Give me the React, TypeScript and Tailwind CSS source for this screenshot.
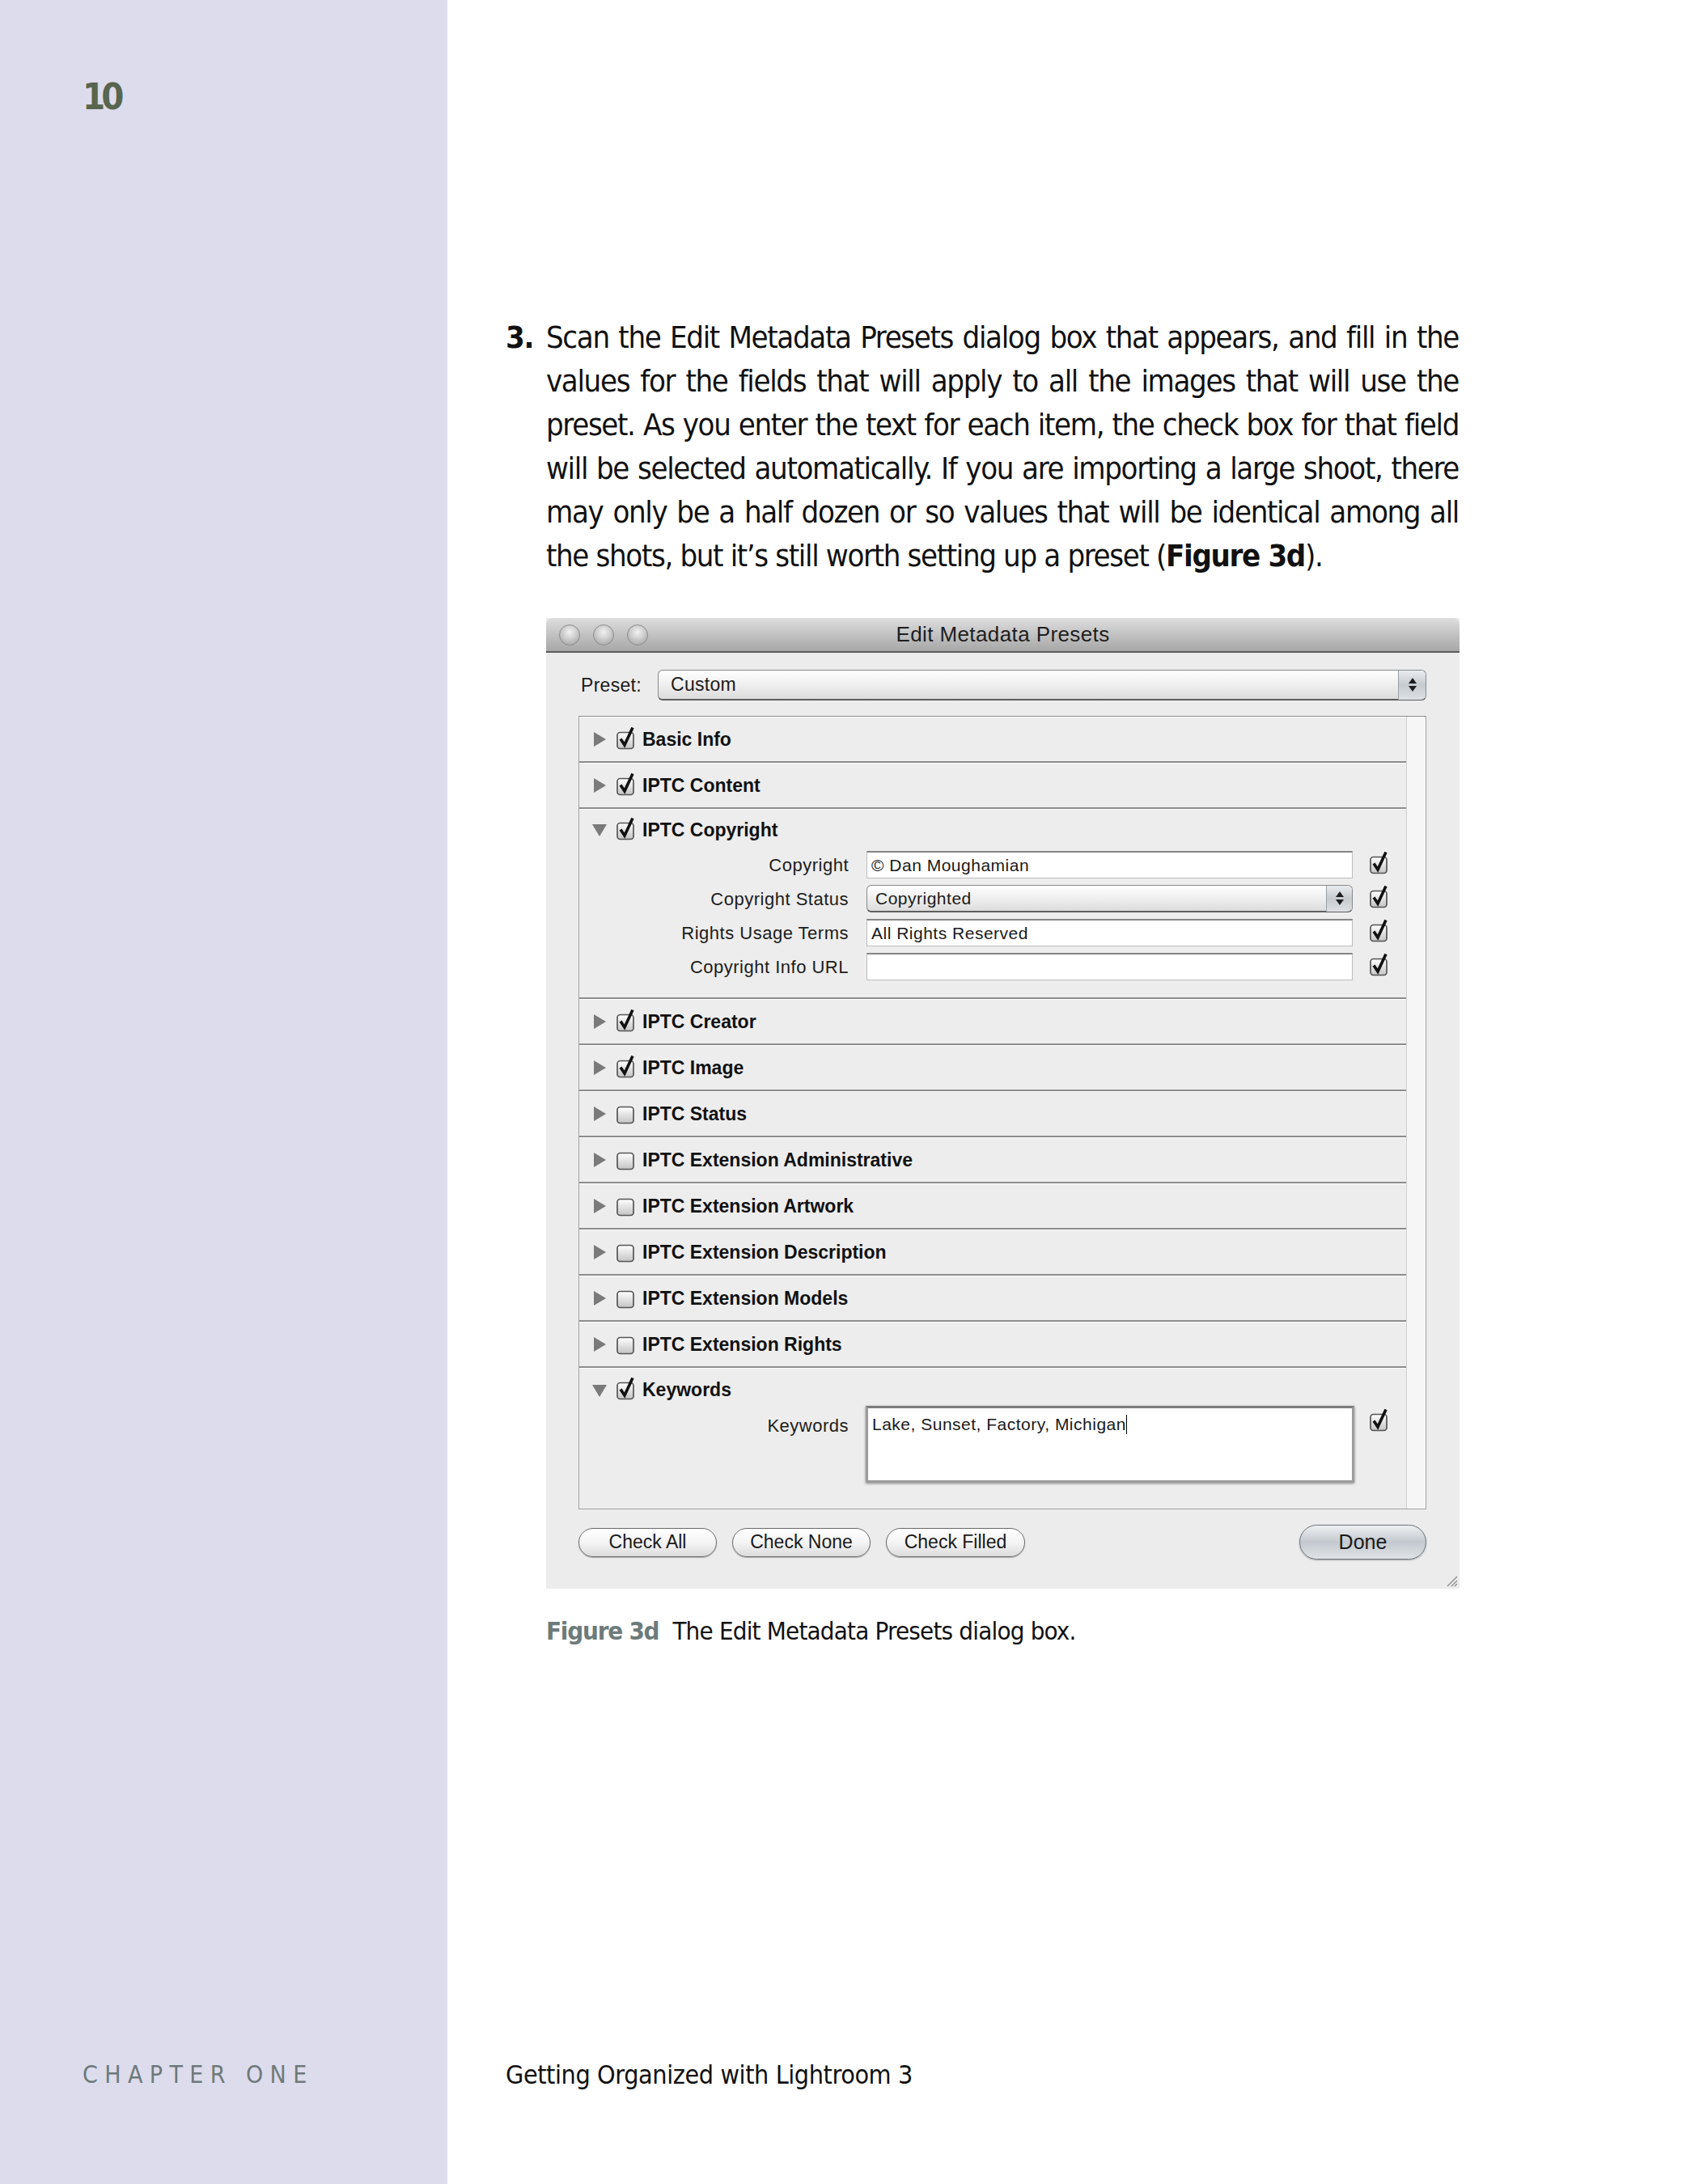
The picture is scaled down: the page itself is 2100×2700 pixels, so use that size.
import React from "react";

const NARROW = "[font-family:'Liberation_Sans_Narrow','DejaVu_Sans_Condensed',Lato,sans-serif]";
const UI = "[font-family:'Liberation_Sans',Arial,sans-serif]";

const Box = ({ on = true }: { on?: boolean }) => (
  <svg width="28" height="30" viewBox="0 0 28 30" className="shrink-0">
    <defs>
      <linearGradient id="cbg" x1="0" y1="0" x2="0" y2="1">
        <stop offset="0" stopColor="#ffffff" />
        <stop offset="1" stopColor="#c4c4c4" />
      </linearGradient>
    </defs>
    <rect x="3" y="8.5" width="20" height="20" rx="3.5" fill="url(#cbg)" stroke="#555" strokeWidth="1.7" />
    {on && (
      <path d="M7 16.5 L12 24 L22 2.5" fill="none" stroke="#111" strokeWidth="3.6" strokeLinecap="butt" strokeLinejoin="miter" />
    )}
  </svg>
);

const Tri = ({ open = false }: { open?: boolean }) => (
  <svg width="18" height="18" viewBox="0 0 18 18" className="shrink-0">
    {open ? <polygon points="0,2 18,2 9,17" fill="#7a7a7a" /> : <polygon points="2,0 17,9 2,18" fill="#7a7a7a" />}
  </svg>
);

const Stepper = ({ w, h }: { w: string; h: string }) => (
  <div className={`${w} ${h} shrink-0 rounded-r-[6px] border-l border-[#9aa0a6] bg-gradient-to-b from-[#e9ecef] via-[#c6cbd0] to-[#dde1e5] flex flex-col items-center justify-center gap-[3px]`}>
    <svg width="10" height="7" viewBox="0 0 10 7"><polygon points="5,0 10,7 0,7" fill="#1e1e1e" /></svg>
    <svg width="10" height="7" viewBox="0 0 10 7"><polygon points="0,0 10,0 5,7" fill="#1e1e1e" /></svg>
  </div>
);

const Header = ({ label, on = true, open = false, h = "h-[56px]" }: { label: string; on?: boolean; open?: boolean; h?: string }) => (
  <div className={`${h} flex items-center pl-[16px]`}>
    <Tri open={open} />
    <div className="ml-[10px] -mt-[5px]">
      <Box on={on} />
    </div>
    <span className={`ml-[6px] text-[23px] font-bold text-[#111] ${UI}`}>{label}</span>
  </div>
);

const Row = ({ label, on = true }: { label: string; on?: boolean }) => (
  <div className="h-[57px] border-b-2 border-[#8c8c8c] shadow-[inset_0_1px_0_#ffffff]">
    <Header label={label} on={on} />
  </div>
);

const FieldRow = ({ label, children }: { label: string; children: React.ReactNode }) => (
  <div className="flex items-center h-[34px]">
    <div className={`w-[333px] text-right text-[22px] tracking-[0.5px] text-[#1c1c1c] ${UI}`}>{label}</div>
    <div className="ml-[22px] w-[601px] h-[34px]">{children}</div>
    <div className="ml-[19px] -mt-[6px]">
      <Box />
    </div>
  </div>
);

const TextField = ({ value }: { value: string }) => (
  <div className={`w-full h-full bg-white border border-[#bdbdbd] border-t-2 border-t-[#858585] flex items-center pl-[5px] text-[21px] tracking-[0.5px] text-[#1a1a1a] ${UI}`}>
    {value}
  </div>
);

const Btn = ({ label, w }: { label: string; w: string }) => (
  <div className={`${w} h-[36px] rounded-full border-[1.5px] border-[#6a6a6a] bg-gradient-to-b from-[#ffffff] via-[#f4f4f4] to-[#dcdcdc] shadow-[0_1px_1px_rgba(0,0,0,0.25)] flex items-center justify-center text-[23px] text-[#1a1a1a] ${UI}`}>
    {label}
  </div>
);

const Light = () => (
  <div className="w-[26px] h-[26px] rounded-full border border-[#8d8d8d] bg-[radial-gradient(circle_at_50%_35%,#f2f2f2,#c4c4c4_55%,#9a9a9a)]" />
);

const lines = [
  "Scan the Edit Metadata Presets dialog box that appears, and fill in the",
  "values for the fields that will apply to all the images that will use the",
  "preset. As you enter the text for each item, the check box for that field",
  "will be selected automatically. If you are importing a large shoot, there",
  "may only be a half dozen or so values that will be identical among all",
];

export default function App() {
  return (
    <div className="w-[2100px] h-[2700px] flex bg-white">
      {/* Sidebar */}
      <div className="w-[553px] h-full bg-[#dddcec] flex flex-col justify-between pl-[102px] pt-[95px] pb-[115px]">
        <div className={`text-[45px] leading-[50px] font-bold tracking-[-5px] text-[#58654f] ${NARROW}`}>10</div>
        <div className={`text-[30px] leading-[40px] tracking-[0.28em] text-[#6d7a7a] ${NARROW}`}>CHAPTER ONE</div>
      </div>

      {/* Main */}
      <div className="flex-1 h-full flex flex-col pl-[72px] pt-[390px] pb-[115px]">
        <div className={`flex text-[38px] leading-[54px] tracking-[-1.35px] text-[#111] ${NARROW}`}>
          <div className="w-[50px] font-bold">3.</div>
          <div className="w-[1128px]">
            {lines.map((l) => (
              <div key={l} className="whitespace-nowrap text-justify [text-align-last:justify]">
                {l}
              </div>
            ))}
            <div className="whitespace-nowrap">
              the shots, but it’s still worth setting up a preset (<span className="font-bold">Figure 3d</span>).
            </div>
          </div>
        </div>

        {/* Dialog */}
        <div className="ml-[50px] mt-[50px] w-[1129px] h-[1200px] bg-[#ececec] relative flex flex-col">
          <div className="h-[43px] rounded-t-[8px] bg-gradient-to-b from-[#dedede] via-[#c2c2c2] to-[#a7a7a7] border-b-2 border-[#5c5c5c] grid grid-cols-[1fr_auto_1fr] items-center">
            <div className="flex items-center gap-[16px] pl-[16px]">
              <Light />
              <Light />
              <Light />
            </div>
            <div className={`text-[26px] tracking-[0.4px] text-[#1e1e1e] ${UI}`}>Edit Metadata Presets</div>
            <div />
          </div>

          <div className="pl-[40px] pr-[41px] flex flex-col">
            {/* Preset row */}
            <div className="mt-[21px] h-[38px] flex items-center">
              <div className={`w-[98px] pl-[3px] text-[23px] tracking-[0.3px] text-[#1a1a1a] ${UI}`}>Preset:</div>
              <div className="flex-1 h-[38px] rounded-[6px] border border-[#8a8a8a] border-b-2 border-b-[#5f5f5f] bg-gradient-to-b from-[#ffffff] via-[#efefef] to-[#dcdcdc] flex items-center">
                <div className={`flex-1 pl-[15px] text-[23px] tracking-[0.3px] text-[#1a1a1a] ${UI}`}>Custom</div>
                <Stepper w="w-[34px]" h="h-[36px]" />
              </div>
            </div>

            {/* Panel */}
            <div className="mt-[19px] h-[981px] flex border border-[#a2a2a2] border-t-[#8a8a8a] bg-[#ededed]">
              <div className="flex-1 flex flex-col">
                <Row label="Basic Info" />
                <Row label="IPTC Content" />
                <div className="h-[235px] border-b-2 border-[#8c8c8c] shadow-[inset_0_1px_0_#ffffff]">
                  <Header label="IPTC Copyright" open h="h-[52px]" />
                  <div className="flex flex-col gap-[8px]">
                    <FieldRow label="Copyright">
                      <TextField value="© Dan Moughamian" />
                    </FieldRow>
                    <FieldRow label="Copyright Status">
                      <div className="w-full h-full rounded-[6px] border border-[#8a8a8a] border-b-2 border-b-[#5f5f5f] bg-gradient-to-b from-[#ffffff] via-[#efefef] to-[#dcdcdc] flex items-center">
                        <div className={`flex-1 pl-[10px] text-[21px] tracking-[0.5px] text-[#1a1a1a] ${UI}`}>Copyrighted</div>
                        <Stepper w="w-[32px]" h="h-[32px]" />
                      </div>
                    </FieldRow>
                    <FieldRow label="Rights Usage Terms">
                      <TextField value="All Rights Reserved" />
                    </FieldRow>
                    <FieldRow label="Copyright Info URL">
                      <TextField value="" />
                    </FieldRow>
                  </div>
                </div>
                <Row label="IPTC Creator" />
                <Row label="IPTC Image" />
                <Row label="IPTC Status" on={false} />
                <Row label="IPTC Extension Administrative" on={false} />
                <Row label="IPTC Extension Artwork" on={false} />
                <Row label="IPTC Extension Description" on={false} />
                <Row label="IPTC Extension Models" on={false} />
                <Row label="IPTC Extension Rights" on={false} />
                <div className="flex-1 shadow-[inset_0_1px_0_#ffffff]">
                  <div className="h-[47px] pt-[8px] flex items-center">
                    <Header label="Keywords" open h="h-[39px]" />
                  </div>
                  <div className="flex items-start">
                    <div className={`w-[333px] pt-[8px] text-right text-[22px] tracking-[0.5px] text-[#1c1c1c] ${UI}`}>Keywords</div>
                    <div className={`ml-[21px] w-[604px] h-[95px] bg-white border-[3px] border-[#9c9c9c] border-t-[#7c7c7c] shadow-[0_1px_3px_rgba(0,0,0,0.45)] pl-[5px] pt-[4px] text-[21px] tracking-[0.5px] text-[#1a1a1a] ${UI}`}>
                      Lake, Sunset, Factory, Michigan<span className="inline-block w-[1.5px] h-[24px] bg-black align-middle -mt-[3px]" />
                    </div>
                    <div className="ml-[17px] mt-[2px]">
                      <Box />
                    </div>
                  </div>
                </div>
              </div>
              <div className="w-[24px] bg-[#f6f6f6] border-l border-[#cfcfcf]" />
            </div>

            {/* Buttons */}
            <div className="mt-[19px] h-[43px] flex items-center">
              <Btn label="Check All" w="w-[171px]" />
              <div className="ml-[19px]"><Btn label="Check None" w="w-[171px]" /></div>
              <div className="ml-[19px]"><Btn label="Check Filled" w="w-[172px]" /></div>
              <div className="flex-1" />
              <div className={`w-[157px] h-[43px] rounded-full border-[1.5px] border-[#6c737a] bg-gradient-to-b from-[#eef0f2] via-[#c3c9cf] to-[#dfe3e7] shadow-[0_1px_2px_rgba(0,0,0,0.3)] flex items-center justify-center text-[25px] text-[#1a1a1a] ${UI}`}>
                Done
              </div>
            </div>
          </div>

          <svg width="16" height="16" viewBox="0 0 16 16" className="absolute right-[2px] bottom-[2px]">
            <path d="M15 3 L3 15 M15 8 L8 15 M15 12 L12 15" stroke="#8a8a8a" strokeWidth="1.2" />
          </svg>
        </div>

        {/* Caption */}
        <div className={`ml-[50px] mt-[30px] h-[44px] flex items-center text-[31px] tracking-[-0.8px] ${NARROW}`}>
          <span className="font-bold text-[#6c7b7b] tracking-[-1.2px]">Figure 3d</span>
          <span className="ml-[17px] text-[#111]">The Edit Metadata Presets dialog box.</span>
        </div>

        <div className="flex-1" />
        <div className={`h-[40px] leading-[40px] text-[32px] tracking-[-0.4px] text-[#111] ${NARROW}`}>Getting Organized with Lightroom 3</div>
      </div>
    </div>
  );
}
